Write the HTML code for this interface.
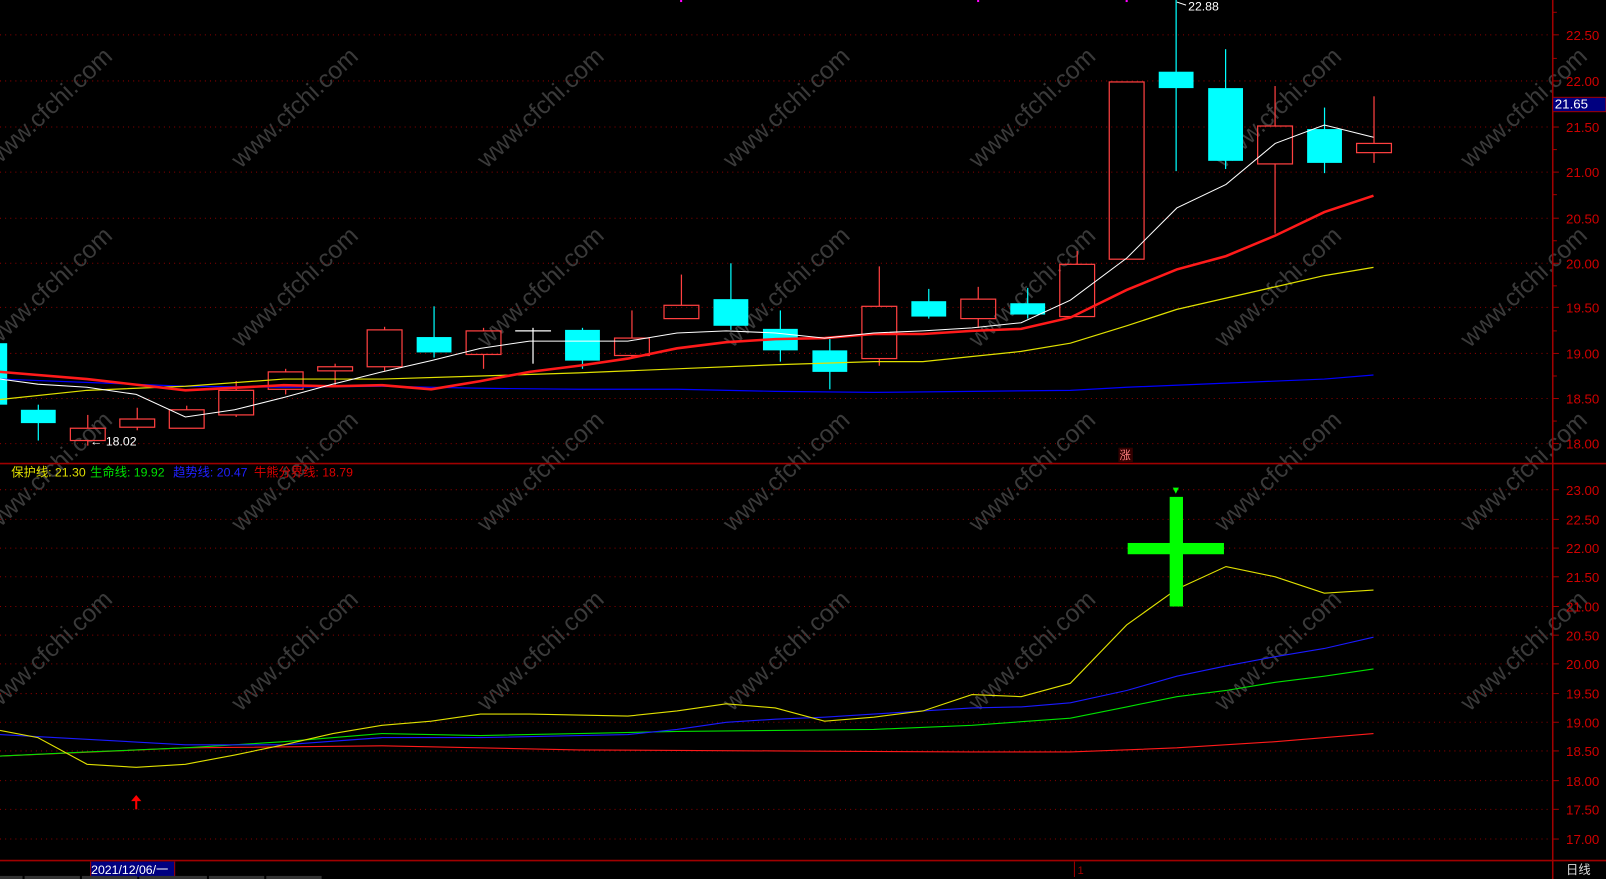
<!DOCTYPE html>
<html><head><meta charset="utf-8"><style>
html,body{margin:0;padding:0;background:#000;overflow:hidden}
svg{display:block}
text{font-family:"Liberation Sans","Noto Sans CJK SC",sans-serif}
</style></head><body>
<svg width="1606" height="879" viewBox="0 0 1568 858" preserveAspectRatio="none" xmlns="http://www.w3.org/2000/svg">
<rect width="1568" height="858" fill="#000"/>
<!-- watermarks -->
<g fill="#3a3a3a" font-size="24" font-family="Liberation Sans,sans-serif">
<g id="wmrow">
<text transform="translate(-5,165) rotate(-43)">www.cfchi.com</text>
<text transform="translate(235,165) rotate(-43)">www.cfchi.com</text>
<text transform="translate(475,165) rotate(-43)">www.cfchi.com</text>
<text transform="translate(715,165) rotate(-43)">www.cfchi.com</text>
<text transform="translate(955,165) rotate(-43)">www.cfchi.com</text>
<text transform="translate(1195,165) rotate(-43)">www.cfchi.com</text>
<text transform="translate(1435,165) rotate(-43)">www.cfchi.com</text>
</g>
<use href="#wmrow" y="175"/>
<use href="#wmrow" y="355"/>
<use href="#wmrow" y="530"/>
</g>
<!-- grid top -->
<g stroke="#8b0000" stroke-dasharray="1,4" stroke-width="1">
<line x1="0" x2="1515" y1="34" y2="34"/><line x1="0" x2="1515" y1="79" y2="79"/><line x1="0" x2="1515" y1="124" y2="124"/><line x1="0" x2="1515" y1="168" y2="168"/><line x1="0" x2="1515" y1="213" y2="213"/><line x1="0" x2="1515" y1="257" y2="257"/><line x1="0" x2="1515" y1="300" y2="300"/><line x1="0" x2="1515" y1="345" y2="345"/><line x1="0" x2="1515" y1="389" y2="389"/><line x1="0" x2="1515" y1="433" y2="433"/>
<line x1="0" x2="1515" y1="478" y2="478"/><line x1="0" x2="1515" y1="507" y2="507"/><line x1="0" x2="1515" y1="535" y2="535"/><line x1="0" x2="1515" y1="563" y2="563"/><line x1="0" x2="1515" y1="592" y2="592"/><line x1="0" x2="1515" y1="620" y2="620"/><line x1="0" x2="1515" y1="648" y2="648"/><line x1="0" x2="1515" y1="677" y2="677"/><line x1="0" x2="1515" y1="705" y2="705"/><line x1="0" x2="1515" y1="733" y2="733"/><line x1="0" x2="1515" y1="762" y2="762"/><line x1="0" x2="1515" y1="790" y2="790"/><line x1="0" x2="1515" y1="819" y2="819"/>
</g>
<!-- axes -->
<g stroke="#a00000" stroke-width="1.5" fill="none">
<line x1="1516" y1="0" x2="1516" y2="858"/>
<line x1="0" y1="452.5" x2="1568" y2="452.5"/>
<line x1="0" y1="840" x2="1568" y2="840"/>
</g>
<g stroke="#a00000" stroke-width="1">
<line x1="1516" x2="1522" y1="34" y2="34"/><line x1="1516" x2="1522" y1="79" y2="79"/><line x1="1516" x2="1522" y1="124" y2="124"/><line x1="1516" x2="1522" y1="168" y2="168"/><line x1="1516" x2="1522" y1="213" y2="213"/><line x1="1516" x2="1522" y1="257" y2="257"/><line x1="1516" x2="1522" y1="300" y2="300"/><line x1="1516" x2="1522" y1="345" y2="345"/><line x1="1516" x2="1522" y1="389" y2="389"/><line x1="1516" x2="1522" y1="433" y2="433"/>
<line x1="1516" x2="1520" y1="12" y2="12"/><line x1="1516" x2="1520" y1="57" y2="57"/><line x1="1516" x2="1520" y1="146" y2="146"/><line x1="1516" x2="1520" y1="190" y2="190"/><line x1="1516" x2="1520" y1="235" y2="235"/><line x1="1516" x2="1520" y1="279" y2="279"/><line x1="1516" x2="1520" y1="323" y2="323"/><line x1="1516" x2="1520" y1="367" y2="367"/><line x1="1516" x2="1520" y1="411" y2="411"/>
<line x1="1516" x2="1522" y1="478" y2="478"/><line x1="1516" x2="1522" y1="507" y2="507"/><line x1="1516" x2="1522" y1="535" y2="535"/><line x1="1516" x2="1522" y1="563" y2="563"/><line x1="1516" x2="1522" y1="592" y2="592"/><line x1="1516" x2="1522" y1="620" y2="620"/><line x1="1516" x2="1522" y1="648" y2="648"/><line x1="1516" x2="1522" y1="677" y2="677"/><line x1="1516" x2="1522" y1="705" y2="705"/><line x1="1516" x2="1522" y1="733" y2="733"/><line x1="1516" x2="1522" y1="762" y2="762"/><line x1="1516" x2="1522" y1="790" y2="790"/><line x1="1516" x2="1522" y1="819" y2="819"/>
</g>
<g fill="#d00000" font-size="13">
<text x="1529" y="39">22.50</text><text x="1529" y="84">22.00</text><text x="1529" y="129">21.50</text><text x="1529" y="173">21.00</text><text x="1529" y="218">20.50</text><text x="1529" y="262">20.00</text><text x="1529" y="305">19.50</text><text x="1529" y="350">19.00</text><text x="1529" y="394">18.50</text><text x="1529" y="438">18.00</text>
<text x="1529" y="483">23.00</text><text x="1529" y="512">22.50</text><text x="1529" y="540">22.00</text><text x="1529" y="568">21.50</text><text x="1529" y="597">21.00</text><text x="1529" y="625">20.50</text><text x="1529" y="653">20.00</text><text x="1529" y="682">19.50</text><text x="1529" y="710">19.00</text><text x="1529" y="738">18.50</text><text x="1529" y="767">18.00</text><text x="1529" y="795">17.50</text><text x="1529" y="824">17.00</text>
</g>
<rect x="1516" y="95" width="52" height="14" fill="#000080" stroke="#a00000"/>
<text x="1518" y="106" fill="#fff" font-size="13">21.65</text>

<!-- candles wicks -->
<g stroke-width="1.2">
<g stroke="#00ffff">
<line x1="-2" y1="330" x2="-2" y2="398"/>
<line x1="37.4" y1="395" x2="37.4" y2="430"/>
<line x1="423.8" y1="299" x2="423.8" y2="349"/>
<line x1="568.7" y1="320" x2="568.7" y2="360"/>
<line x1="713.6" y1="257" x2="713.6" y2="322"/>
<line x1="761.9" y1="303" x2="761.9" y2="353"/>
<line x1="810.2" y1="329" x2="810.2" y2="380"/>
<line x1="906.8" y1="282" x2="906.8" y2="311"/>
<line x1="1003.4" y1="281" x2="1003.4" y2="311"/>
<line x1="1148.3" y1="0" x2="1148.3" y2="167"/>
<line x1="1196.6" y1="48" x2="1196.6" y2="165"/>
<line x1="1293.2" y1="105" x2="1293.2" y2="169"/>
</g>
<g stroke="#ff4040">
<line x1="85.7" y1="405" x2="85.7" y2="418"/><line x1="85.7" y1="430" x2="85.7" y2="435"/>
<line x1="134" y1="398" x2="134" y2="409"/><line x1="134" y1="417" x2="134" y2="420"/>
<line x1="182.3" y1="396" x2="182.3" y2="400"/>
<line x1="230.6" y1="372" x2="230.6" y2="381"/><line x1="230.6" y1="405" x2="230.6" y2="407"/>
<line x1="278.9" y1="360" x2="278.9" y2="363"/><line x1="278.9" y1="380" x2="278.9" y2="385"/>
<line x1="327.2" y1="355" x2="327.2" y2="358"/><line x1="327.2" y1="362" x2="327.2" y2="378"/>
<line x1="375.5" y1="319" x2="375.5" y2="322"/><line x1="375.5" y1="358" x2="375.5" y2="362"/>
<line x1="472.1" y1="320" x2="472.1" y2="323"/><line x1="472.1" y1="346" x2="472.1" y2="360"/>
<line x1="617" y1="303" x2="617" y2="330"/><line x1="617" y1="347" x2="617" y2="350"/>
<line x1="665.3" y1="268" x2="665.3" y2="298"/>
<line x1="858.5" y1="260" x2="858.5" y2="299"/><line x1="858.5" y1="350" x2="858.5" y2="357"/>
<line x1="955.1" y1="280" x2="955.1" y2="292"/><line x1="955.1" y1="311" x2="955.1" y2="320"/>
<line x1="1051.7" y1="245" x2="1051.7" y2="258"/>
<line x1="1244.9" y1="84" x2="1244.9" y2="123"/><line x1="1244.9" y1="160" x2="1244.9" y2="228"/>
<line x1="1341.5" y1="94" x2="1341.5" y2="140"/><line x1="1341.5" y1="149" x2="1341.5" y2="159"/>
</g>
<g stroke="#fff"><line x1="520.4" y1="320" x2="520.4" y2="355"/><line x1="503" y1="323" x2="538" y2="323"/></g>
</g>
<g fill="#00ffff">
<rect x="-30" y="335" width="37" height="60"/>
<rect x="20.4" y="400" width="34" height="13"/>
<rect x="406.8" y="329" width="34" height="15"/>
<rect x="551.7" y="322" width="34" height="30"/>
<rect x="696.6" y="292" width="34" height="26"/>
<rect x="744.9" y="321" width="34" height="21"/>
<rect x="793.2" y="342" width="34" height="21"/>
<rect x="889.8" y="294" width="34" height="15"/>
<rect x="986.4" y="296" width="34" height="11"/>
<rect x="1131.3" y="70" width="34" height="16"/>
<rect x="1179.6" y="86" width="34" height="71"/>
<rect x="1276.2" y="126" width="34" height="33"/>
</g>
<g fill="none" stroke="#ff4040" stroke-width="1.2">
<rect x="68.7" y="418" width="34" height="12"/>
<rect x="117" y="409" width="34" height="8"/>
<rect x="165.3" y="400" width="34" height="18"/>
<rect x="213.6" y="381" width="34" height="24"/>
<rect x="261.9" y="363" width="34" height="17"/>
<rect x="310.2" y="358" width="34" height="4"/>
<rect x="358.5" y="322" width="34" height="36"/>
<rect x="455.1" y="323" width="34" height="23"/>
<rect x="600" y="330" width="34" height="17"/>
<rect x="648.3" y="298" width="34" height="13"/>
<rect x="841.5" y="299" width="34" height="51"/>
<rect x="938.1" y="292" width="34" height="19"/>
<rect x="1034.7" y="258" width="34" height="51"/>
<rect x="1083" y="80" width="34" height="173"/>
<rect x="1227.9" y="123" width="34" height="37"/>
<rect x="1324.5" y="140" width="34" height="9"/>
</g>
<!-- MA lines top -->
<g fill="none">
<polyline stroke="#0000ff" stroke-width="1.2" points="0,370 181,377 277,378 373,377 469,379 565,380 661,380 757,382 853,383 949,382 1045,381 1100,378 1197,374 1293,370 1341,366"/>
<polyline stroke="#e0e000" stroke-width="1.2" points="0,390 85,381 181,377 277,370 373,370 469,367 565,364 661,360 757,356 853,353 901,353 949,348 997,343 1045,335 1100,318 1149,302 1197,291 1245,280 1293,269 1341,261"/>
<polyline stroke="#ff1a1a" stroke-width="2.5" points="0,363 85,370 181,381 277,376 325,377 373,376 421,380 469,372 517,363 565,357 613,350 661,340 709,334 757,331 805,330 853,326 901,326 949,323 997,321 1045,310 1100,283 1149,263 1197,250 1245,230 1293,207 1341,191"/>
<polyline stroke="#ffffff" stroke-width="1" points="0,370 37,375 85,378 133,385 181,407 229,400 277,388 325,375 373,363 421,352 469,340 517,333 565,333 613,333 661,325 709,323 757,325 805,330 853,325 901,323 949,320 997,315 1045,293 1100,252 1149,203 1197,180 1245,140 1293,122 1341,134"/>
</g>
<text x="88" y="435" fill="#fff" font-size="12">← 18.02</text>
<path d="M1149,2 L1158,5" stroke="#fff"/>
<text x="1160" y="10" fill="#fff" font-size="12">22.88</text>
<rect x="1092" y="437" width="14" height="14" fill="#300"/>
<text x="1093" y="448" fill="#ff8080" font-size="11">涨</text>
<g fill="#ff00ff"><rect x="664" y="0" width="2" height="2"/><rect x="954" y="0" width="2" height="2"/><rect x="1099" y="0" width="2" height="2"/></g>
<!-- legend -->
<text y="465" font-size="12"><tspan x="11" fill="#e0e000">保护线: 21.30</tspan><tspan x="88" fill="#00e000">生命线: 19.92</tspan><tspan x="169" fill="#2020ff">趋势线: 20.47</tspan><tspan x="248" fill="#e00000">牛熊分界线: 18.79</tspan></text>
<!-- bottom panel lines -->
<g fill="none" stroke-width="1.1">
<polyline stroke="#ff1a1a" points="0,738 181,730 373,728 565,732 757,733 949,734 1045,734 1149,730 1245,724 1341,716"/>
<polyline stroke="#00e000" points="0,738 85,734 181,730 277,724 373,716 469,718 565,716 661,714 757,713 853,712 949,708 1045,701 1100,690 1149,680 1197,674 1245,666 1293,660 1341,653"/>
<polyline stroke="#1a1aff" points="0,717 181,727 277,727 373,720 469,720 565,718 613,717 661,712 709,705 757,702 805,700 853,697 901,694 949,691 997,690 1045,686 1100,674 1149,660 1197,650 1245,641 1293,633 1341,622"/>
<polyline stroke="#e0e000" points="0,713 37,720 85,746 133,749 181,746 229,737 277,727 325,716 373,708 421,704 469,697 517,697 565,698 613,699 661,694 709,687 757,691 805,704 853,700 901,694 949,678 997,680 1045,667 1100,610 1149,575 1197,553 1245,563 1293,579 1341,576"/>
</g>
<g fill="#00ff00">
<rect x="1142" y="485" width="13" height="107"/>
<rect x="1101" y="530" width="94" height="11"/>
<path d="M1145,476 L1151,476 L1148,482 Z"/>
</g>
<g stroke="#ff0000" stroke-width="2"><line x1="133" y1="778" x2="133" y2="790"/></g>
<path d="M128,782 L133,776 L138,782 Z" fill="#f00"/>
<!-- bottom bar -->
<rect x="88" y="841" width="83" height="15" fill="#000080"/>
<line x1="88.5" y1="841" x2="88.5" y2="856" stroke="#a00000"/>
<line x1="170.5" y1="841" x2="170.5" y2="856" stroke="#a00000"/>
<text x="89" y="853" fill="#fff" font-size="12">2021/12/06/一</text>
<line x1="1049" y1="841" x2="1049" y2="856" stroke="#a00000"/>
<text x="1052" y="853" fill="#a00000" font-size="11">1</text>
<text x="1529" y="853" fill="#ddd" font-size="12">日线</text>
<g fill="#333"><rect x="0" y="855" width="22" height="3"/><rect x="24" y="855" width="54" height="3"/><rect x="80" y="855" width="54" height="3"/><rect x="136" y="855" width="66" height="3"/><rect x="204" y="855" width="54" height="3"/><rect x="260" y="855" width="54" height="3"/></g>
</svg>
</body></html>
